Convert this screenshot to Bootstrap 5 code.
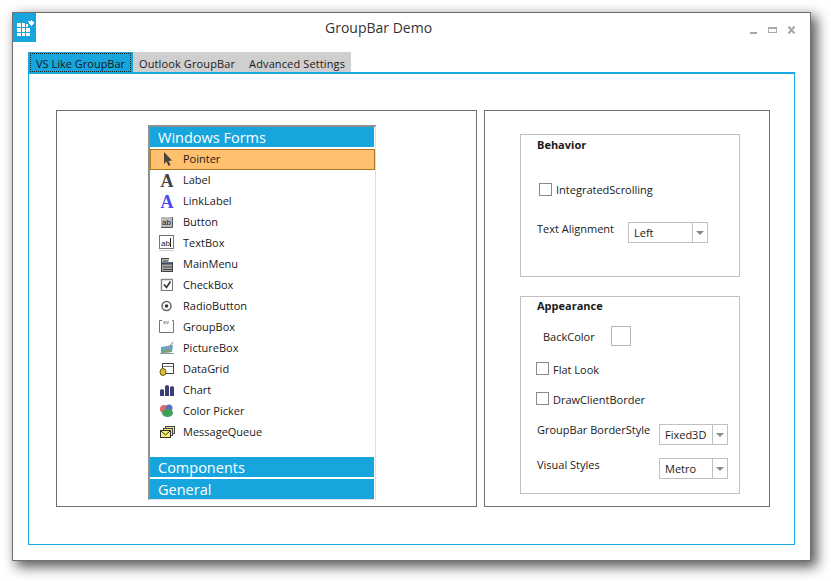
<!DOCTYPE html>
<html lang="en" class="h-100">
<head>
    <meta charset="UTF-8">
    <meta name="viewport" content="width=device-width, initial-scale=1.0">
    <title>GroupBar Demo</title>
    <link href="https://cdn.jsdelivr.net/npm/bootstrap@5.3.0/dist/css/bootstrap.min.css" rel="stylesheet">
    <style>
        body { background: #fff; font-family: "Open Sans", "Noto Sans", sans-serif; font-size: 11px; color: #1a1a1a; line-height: 15px; height: 581px; padding-top: 12px; }
        .app-window { width: 799px; height: 549px; margin-left: 12px; background: #fff; border: 1px solid #6f6f6f; box-shadow: 5px 5px 12px 1px rgba(0,0,0,.65); }
        .title-row { height: 29px; }
        .app-logo { width: 23px; height: 29px; background: #17a5de; }
        .app-title { margin: 0 0 0 289px; padding-top: 5px; font-size: 14px; line-height: 19px; color: #333; width: 400px; }
        .win-btns { margin-left: auto; }
        .demo-body { padding: 10px 15px 15px; height: 518px; }
        .tab-strip { background: #cfcfcf; width: 323px; height: 20px; }
        .tab-item { padding: 4px 8px 0 6px; height: 20px; white-space: nowrap; letter-spacing: .12px; }
        .tab-active { background: #17a5de; padding: 1px 2px 0; width: 105px; letter-spacing: 0; }
        .tab-focus { border: 1px dotted #222; height: 19px; padding: 2px 5px 0; }
        .tab-panel { height: 473px; border: 1px solid #17a8e0; border-top-width: 2px; padding: 36px 0 0 27px; gap: 7px; }
        .dark-box { border: 1px solid #6f6f6f; height: 397px; }
        .left-box { width: 421px; padding: 14px 0 0 91px; }
        .right-box { width: 286px; padding: 23px 0 0 35px; }
        .gbar { width: 228px; height: 375px; border: 1px solid #dedede; border-left: 2px solid #8f8f8f; border-top: 2px solid #8f8f8f; }
        .gbar-head { height: 20px; background: #17a5de; color: #fff; font-size: 14.5px; line-height: 21px; padding-left: 8px; margin-right: 1px; flex: none; }
        .gbar-last { margin-top: 2px; }
        .gbar-list { margin-top: 2px; border-radius: 0; }
        .gbar-item { height: 21px; border: 0; padding: 0 0 2px 9px; background: transparent; color: #1a1a1a; border-radius: 0 !important; font-size: 11px; line-height: 19px; gap: 8px; }
        .gbar-item svg, .glyph-a { flex: none; align-self: flex-start; margin-top: 2px; }
        .gbar-item.sel { background: #ffc06f; border: 1px solid #a87a20; padding: 0 0 2px 8px; }
        .gbar-item.sel svg { margin-top: 1px; }
        .gbar-list .sel + .gbar-item { border-top: 0; }
        .glyph-a { width: 16px; height: 18px; line-height: 18px; text-align: center; font-family: "Liberation Serif", serif; font-weight: 700; font-size: 18px; color: #444; }
        .glyph-link { color: #4a4aef; }
        .grp-box { width: 220px; border: 1px solid #c0c0c0; padding-left: 16px; }
        .grp-a { height: 143px; }
        .grp-b { height: 198px; margin-top: 19px; }
        .grp-name { font-weight: 700; height: 15px; margin: 2px 0 0; font-size: 11px; line-height: 15px; }
        .grp-b .grp-name { margin-top: 1px; }
        .flat-check { width: 13px; height: 13px; margin: 0 4px 0 0; border: 1px solid #8a8a8a; border-radius: 0 !important; flex: none; align-self: flex-start; }
        .flat-combo { height: 21px; border: 1px solid #c0c0c0; background: #fff; line-height: 20px; padding-left: 5px; }
        .combo-arrow { margin-left: auto; width: 15px; height: 19px; border-left: 1px solid #c0c0c0; }
        .combo-arrow::after { content: ""; border: 4px solid transparent; border-top: 4px solid #8a8a8a; border-bottom: 0; }
        .color-swatch { width: 20px; height: 20px; border: 1px solid #b5b5bd; }
        .row-scroll { margin: 31px 0 0 2px; height: 15px; }
        .row-scroll span { margin-top: -1px; }
        .row-align { margin-top: 24px; }
        .lbl-align { width: 91px; margin-top: -1px; }
        .combo-left { width: 80px; }
        .row-back { margin: 13px 0 0 6px; height: 20px; gap: 16px; }
        .row-back span { width: 52px; margin-top: 3px; }
        .row-flat { margin: 16px 0 0 -1px; height: 15px; }
        .row-draw { margin: 15px 0 0 -1px; height: 15px; }
        .row-border { margin-top: 17px; }
        .row-border .lbl-combo { margin-top: -2px; }
        .row-visual { margin-top: 13px; }
        .lbl-combo { width: 122px; margin-top: -1px; }
        .combo-right { width: 69px; }
    </style>
</head>
<body>
    <div class="app-window">
        <div class="title-row d-flex">
            <div class="app-logo">
                <svg width="23" height="29" viewBox="0 0 23 29" class="d-block">
                    <path fill="#fff" d="M4 10h4v4H4zM9 10h3v4H9zM13 11h2v3h-2zM4 15h4v4H4zM9 15h3v4H9zM13 15h4v4h-4zM4 20h4v3H4zM9 20h3v3H9zM13 20h4v3h-4z"/>
                    <path fill="#fff" d="M16 8h2V7h1v1h1v1h1v2h-1v1h-1v1h-1v-1h-1v-1h-1V9h-1V8z"/>
                </svg>
            </div>
            <h1 class="app-title fw-normal">GroupBar Demo</h1>
            <div class="win-btns">
                <svg width="65" height="29" viewBox="0 0 65 29" class="d-block">
                    <rect x="5" y="19" width="7" height="2" fill="#a8a8a8"/>
                    <rect x="23.500" y="14.500" width="8" height="5" fill="none" stroke="#a8a8a8"/>
                    <rect x="23" y="14" width="9" height="2" fill="#a8a8a8"/>
                    <path d="M43.500 13.500l6 7M49.500 13.500l-6 7" stroke="#a8a8a8" stroke-width="2" fill="none"/>
                </svg>
            </div>
        </div>
        <div class="demo-body">
            <div class="tab-strip d-flex">
                <div class="tab-item tab-active"><div class="tab-focus">VS Like GroupBar</div></div>
                <div class="tab-item">Outlook GroupBar</div>
                <div class="tab-item">Advanced Settings</div>
            </div>
            <div class="tab-panel d-flex">
                <div class="dark-box left-box">
                    <div class="gbar d-flex flex-column">
                        <div class="gbar-head">Windows Forms</div>
                        <div class="list-group gbar-list">
                            <div class="list-group-item gbar-item sel d-flex align-items-center">
                                <svg width="16" height="16" viewBox="0 0 16 16"><path fill="#444" d="M5 1l8 8.500-3.500.5 2 4-2 1-2-4.500L5 13z"/></svg>Pointer</div>
                            <div class="list-group-item gbar-item d-flex align-items-center">
                                <span class="glyph-a">A</span>Label</div>
                            <div class="list-group-item gbar-item d-flex align-items-center">
                                <span class="glyph-a glyph-link">A</span>LinkLabel</div>
                            <div class="list-group-item gbar-item d-flex align-items-center">
                                <svg width="16" height="16" viewBox="0 0 16 16"><rect x="2" y="3" width="12" height="10" fill="#bbb"/><path d="M13.500 3v10.500H2" fill="none" stroke="#555"/><text x="3" y="11" font-family="Liberation Sans" font-size="8" fill="#222">ab</text></svg>Button</div>
                            <div class="list-group-item gbar-item d-flex align-items-center">
                                <svg width="16" height="16" viewBox="0 0 16 16"><rect x=".5" y=".5" width="14" height="13" fill="#fff" stroke="#777"/><path d="M0 15.500h15" stroke="#ccc"/><text x="2" y="10.500" font-family="Liberation Sans" font-size="8" fill="#222">ab</text><path d="M11.500 3v9" stroke="#222"/></svg>TextBox</div>
                            <div class="list-group-item gbar-item d-flex align-items-center">
                                <svg width="16" height="16" viewBox="0 0 16 16"><rect x="2" y="2" width="8" height="4" fill="#bbb"/><rect x="2" y="6" width="12" height="10" fill="#a8a8a8"/><path d="M2.500 2v14M2 2.500h8M4 5h5" stroke="#444"/><path d="M3 7.500h10" stroke="#3a4a6a" stroke-width="2"/><path d="M4 11h9M4 13.500h9" stroke="#444"/><path d="M2 15.500h12M13.500 6v10" stroke="#444"/></svg>MainMenu</div>
                            <div class="list-group-item gbar-item d-flex align-items-center">
                                <svg width="16" height="16" viewBox="0 0 16 16"><rect x="2.500" y="2.500" width="11" height="11" fill="#fff" stroke="#777"/><path d="M2 2.500h12M2.500 2v12" stroke="#888" stroke-width="1.500"/><path d="M5 7.500l2.500 3 4-6" fill="none" stroke="#333" stroke-width="1.600"/></svg>CheckBox</div>
                            <div class="list-group-item gbar-item d-flex align-items-center">
                                <svg width="16" height="16" viewBox="0 0 16 16"><circle cx="7.500" cy="8" r="4.500" fill="#fff" stroke="#666" stroke-width="1.500"/><circle cx="7.500" cy="8" r="1.800" fill="#333"/></svg>RadioButton</div>
                            <div class="list-group-item gbar-item d-flex align-items-center">
                                <svg width="16" height="16" viewBox="0 0 16 16"><path d="M3 1.500H.5v12h14v-12H13" fill="none" stroke="#777"/><text x="4" y="5" font-family="Liberation Sans" font-size="6" fill="#555">xv</text></svg>GroupBox</div>
                            <div class="list-group-item gbar-item d-flex align-items-center">
                                <svg width="16" height="16" viewBox="0 0 16 16"><path fill="#5fa7c9" d="M2 7l12-2-1 7-11 1z"/><path fill="#7aa060" d="M2 13l5-4 6 3z"/><path d="M7 11l7-9" stroke="#c08a7a" stroke-width="1.200"/><path d="M1 13.500h14" stroke="#999"/></svg>PictureBox</div>
                            <div class="list-group-item gbar-item d-flex align-items-center">
                                <svg width="16" height="16" viewBox="0 0 16 16"><rect x="3.500" y="2.500" width="11" height="10" fill="#fff" stroke="#444"/><path d="M4 5.500h10" stroke="#777"/><ellipse cx="4" cy="11" rx="3" ry="3.500" fill="#e2c030" stroke="#6c5a10"/></svg>DataGrid</div>
                            <div class="list-group-item gbar-item d-flex align-items-center">
                                <svg width="16" height="16" viewBox="0 0 16 16"><path fill="#3c3c78" d="M1 8l2-1 2 1v6H1zM6 4l2-1 2 1v10H6zM11 5l2-1 2 1v9h-4z"/></svg>Chart</div>
                            <div class="list-group-item gbar-item d-flex align-items-center">
                                <svg width="16" height="16" viewBox="0 0 16 16"><circle cx="5" cy="6" r="4" fill="#e06a72"/><circle cx="10" cy="5" r="3.500" fill="#5a72c0"/><ellipse cx="8.500" cy="10" rx="5.500" ry="4" fill="#3f9f55"/></svg>Color Picker</div>
                            <div class="list-group-item gbar-item d-flex align-items-center">
                                <svg width="16" height="16" viewBox="0 0 16 16"><rect x="6.500" y="2.500" width="9" height="7" fill="#eee58a" stroke="#444"/><rect x="4.500" y="4.500" width="9" height="7" fill="#f3ea8c" stroke="#444"/><rect x="1.500" y="6.500" width="10" height="7" fill="#f6ee70" stroke="#333"/><path d="M2 7l4.500 4L11 7" fill="none" stroke="#333"/></svg>MessageQueue</div>
                        </div>
                        <div class="gbar-head mt-auto">Components</div>
                        <div class="gbar-head gbar-last">General</div>
                    </div>
                </div>
                <div class="dark-box right-box">
                    <div class="grp-box grp-a">
                        <p class="grp-name">Behavior</p>
                        <div class="d-flex row-scroll"><input class="form-check-input flat-check" type="checkbox" aria-label="IntegratedScrolling"><span>IntegratedScrolling</span></div>
                        <div class="d-flex row-align"><span class="lbl-align">Text Alignment</span><div class="flat-combo combo-left d-flex">Left<span class="combo-arrow d-flex align-items-center justify-content-center"></span></div></div>
                    </div>
                    <div class="grp-box grp-b">
                        <p class="grp-name">Appearance</p>
                        <div class="d-flex row-back"><span>BackColor</span><div class="color-swatch"></div></div>
                        <div class="d-flex align-items-center row-flat"><input class="form-check-input flat-check" type="checkbox" aria-label="Flat Look"><span>Flat Look</span></div>
                        <div class="d-flex align-items-center row-draw"><input class="form-check-input flat-check" type="checkbox" aria-label="DrawClientBorder"><span>DrawClientBorder</span></div>
                        <div class="d-flex row-border"><span class="lbl-combo">GroupBar BorderStyle</span><div class="flat-combo combo-right d-flex">Fixed3D<span class="combo-arrow d-flex align-items-center justify-content-center"></span></div></div>
                        <div class="d-flex row-visual"><span class="lbl-combo">Visual Styles</span><div class="flat-combo combo-right d-flex">Metro<span class="combo-arrow d-flex align-items-center justify-content-center"></span></div></div>
                    </div>
                </div>
            </div>
        </div>
    </div>
    <script src="https://cdn.jsdelivr.net/npm/bootstrap@5.3.0/dist/js/bootstrap.bundle.min.js"></script>
</body>
</html>
